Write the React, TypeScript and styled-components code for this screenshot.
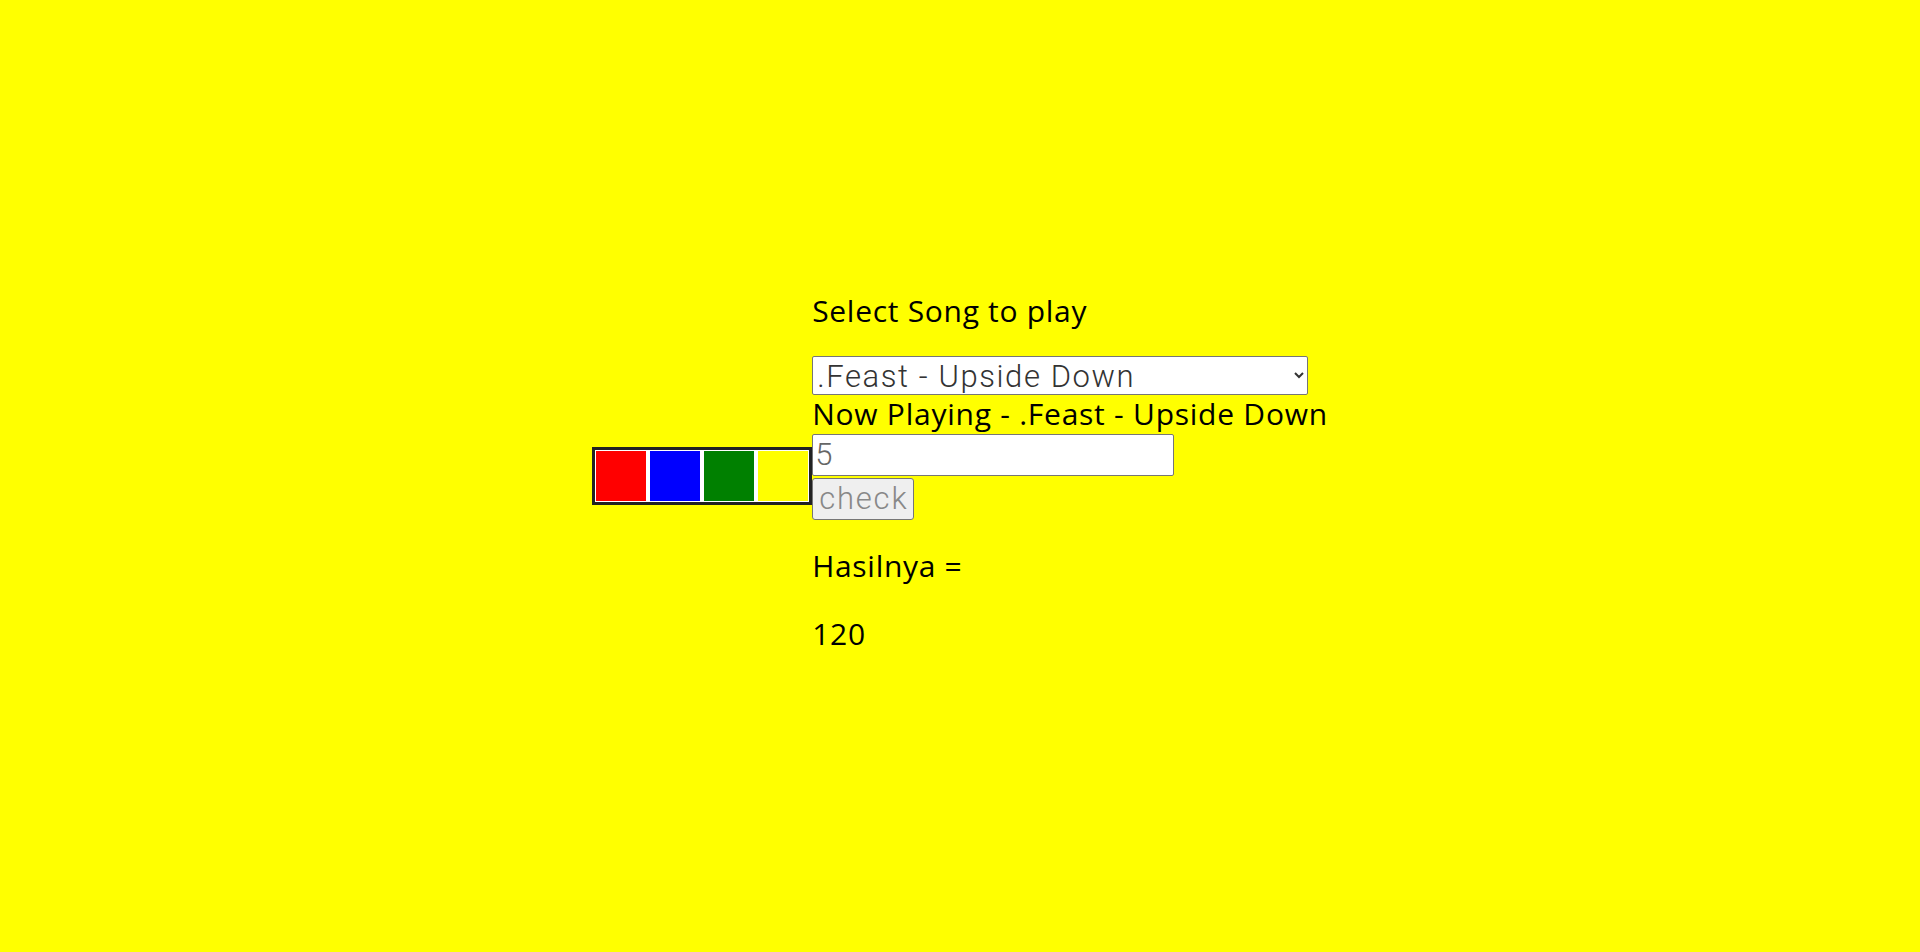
import styled, { createGlobalStyle } from "styled-components";

const GlobalStyle = createGlobalStyle`
  html, body {
    margin: 0;
    padding: 0;
  }
  body {
    background: #ffff00;
    font-family: "Open Sans", "Noto Sans", sans-serif;
    color: #000;
  }
`;

const colors = ["#ff0000", "#0000ff", "#008000", "#ffff00"];

function App() {
  return (
    <>
      <GlobalStyle />
      <Page>
        <Swatches>
          {colors.map((c) => (
            <Swatch key={c} $color={c} />
          ))}
        </Swatches>
        <Player>
          <Label>Select Song to play</Label>
          <SongSelect defaultValue="upside">
            <option value="upside">.Feast - Upside Down</option>
            <option value="other">.Feast - Peradaban</option>
          </SongSelect>
          <NowPlaying>Now Playing - .Feast - Upside Down</NowPlaying>
          <NumberInput type="text" defaultValue="5" />
          <CheckButton>check</CheckButton>
          <Result>Hasilnya =</Result>
          <Result $last>120</Result>
        </Player>
      </Page>
    </>
  );
}

const Page = styled.div`
  display: flex;
  justify-content: center;
  align-items: center;
  min-height: 100vh;
`;

const Swatches = styled.div`
  display: flex;
  gap: 4px;
  padding: 1px;
  background: #fff;
  border: 3px solid #222;
`;

const Swatch = styled.div<{ $color: string }>`
  width: 50px;
  height: 50px;
  background: ${(p) => p.$color};
`;

const Player = styled.div`
  display: flex;
  flex-direction: column;
  align-items: flex-start;
  padding-bottom: 8px;
`;

const Label = styled.p`
  margin: 0 0 27px;
  font-size: 30px;
  line-height: 36px;
  letter-spacing: 0.7px;
`;

const SongSelect = styled.select`
  width: 496px;
  height: 39px;
  font-family: "Roboto", "Open Sans", sans-serif;
  font-size: 31px;
  line-height: 37px;
  font-weight: 300;
  letter-spacing: 1.6px;
  color: #333;
  background: #fff;
  border: 1px solid #767676;
  border-radius: 2px;
  padding: 0;
`;

const NowPlaying = styled.div`
  margin-top: 7px;
  font-size: 30px;
  line-height: 24px;
  letter-spacing: 0.75px;
`;

const NumberInput = styled.input`
  box-sizing: border-box;
  width: 362px;
  height: 42px;
  margin: 8px 0 0;
  padding: 1px 2px;
  font-family: "Roboto", "Open Sans", sans-serif;
  font-size: 31px;
  font-weight: 300;
  color: #666;
  background: #fff;
  border: 1px solid #767676;
  border-radius: 2px;
  outline: none;
`;

const CheckButton = styled.button`
  box-sizing: border-box;
  width: 102px;
  height: 42px;
  margin-top: 2px;
  padding: 0 6px;
  font-family: "Roboto", "Open Sans", sans-serif;
  font-size: 31px;
  font-weight: 300;
  letter-spacing: 1.8px;
  color: #888;
  background: #efefef;
  border: 1px solid #767676;
  border-radius: 3px;
`;

const Result = styled.p<{ $last?: boolean }>`
  margin: ${(p) => (p.$last ? "32px" : "28px")} 0 0;
  font-size: 30px;
  line-height: 36px;
  letter-spacing: 0.7px;
`;

export default App;
